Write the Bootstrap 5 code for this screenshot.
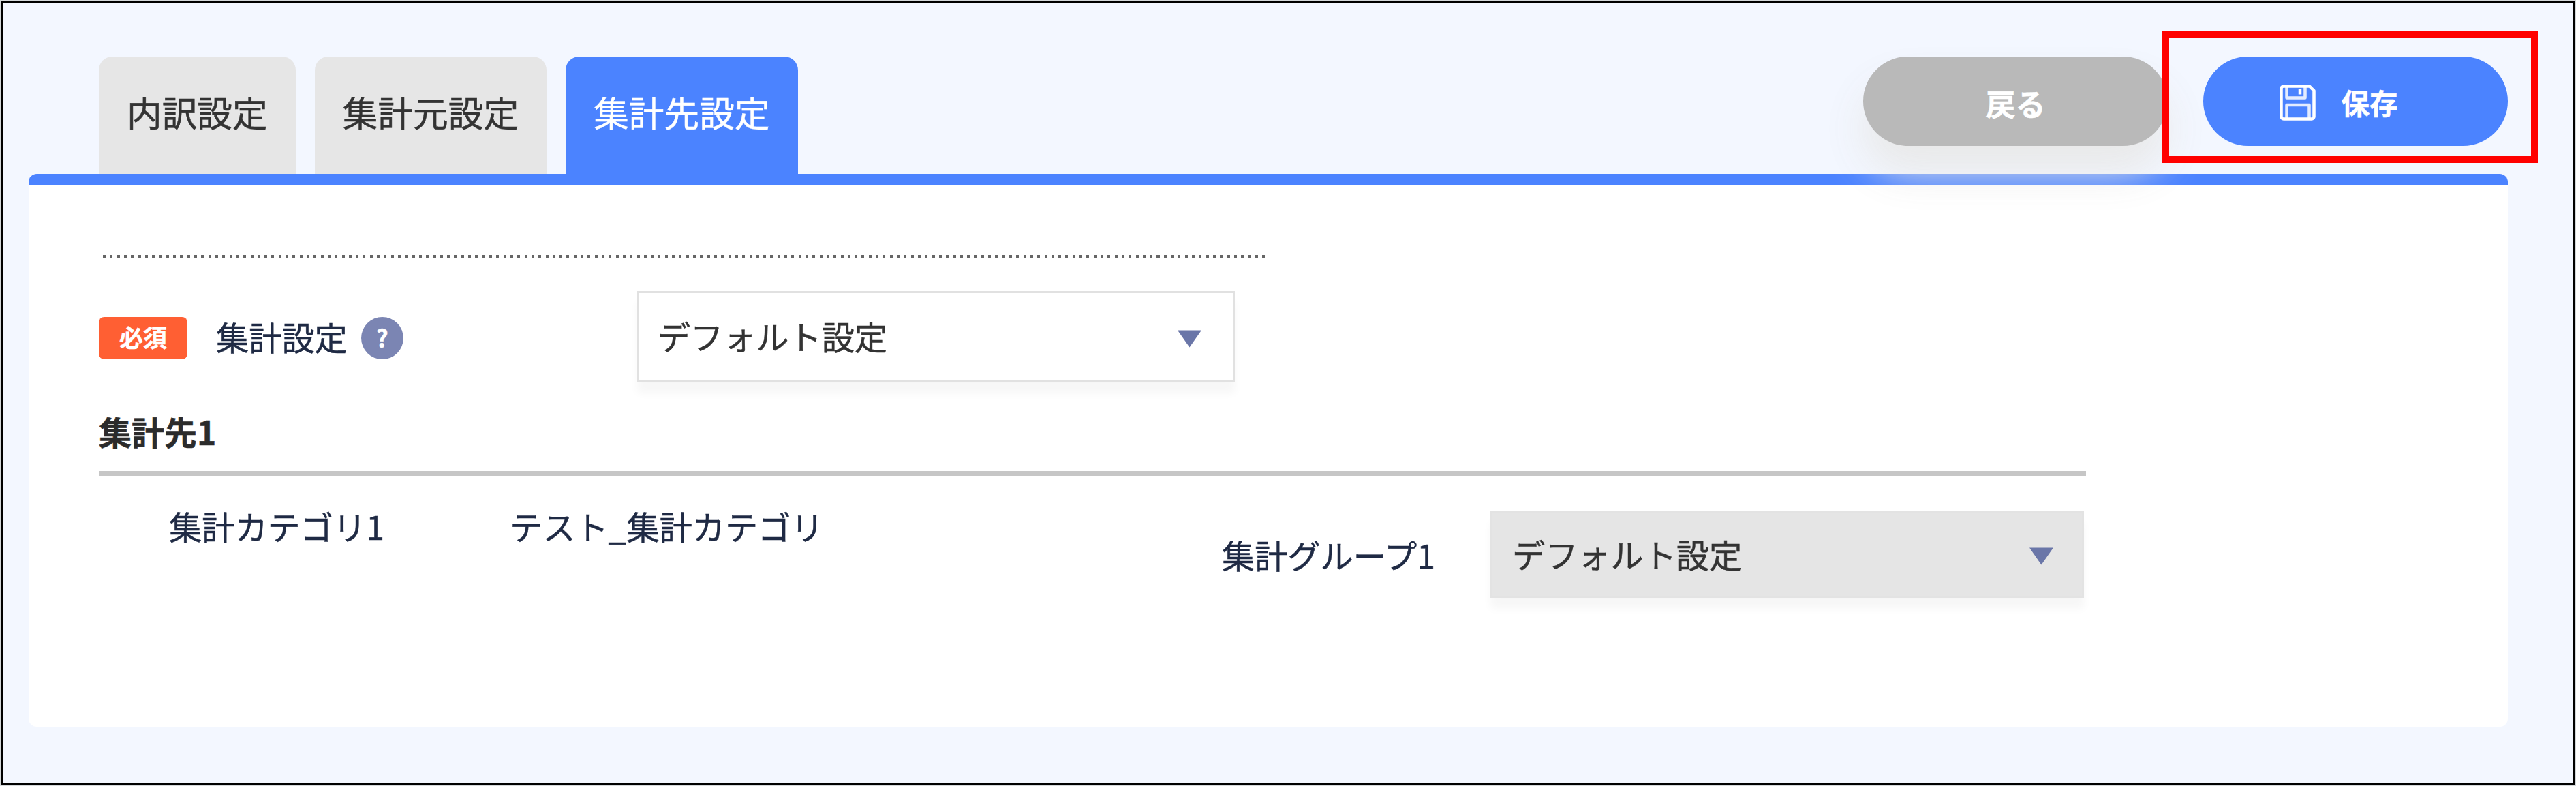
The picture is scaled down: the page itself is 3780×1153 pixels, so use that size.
<!DOCTYPE html>
<html lang="ja">
<head>
<meta charset="utf-8">
<meta name="viewport" content="width=device-width, initial-scale=1">
<title>集計先設定</title>
<link href="https://cdn.jsdelivr.net/npm/bootstrap@5.3.0/dist/css/bootstrap.min.css" rel="stylesheet">
<style>
html, body { height: 100%; }
body { font-family: "Noto Sans CJK JP", sans-serif; font-size: 48px; line-height: 1; color: #1f2a44; background: #d4d8da; overflow: hidden; -webkit-text-stroke: .5px currentColor; }
.screen { margin: 1px; width: 3778px; height: 1151px; border: 3px solid #000; background: #f3f7ff; }
.topbar { height: 251px; padding: 79px 96px 0 141px; position: relative; z-index: 2; }
.set-tabs { gap: 28px; }
.set-tabs .nav-link { height: 172px; padding: 54px 41px 0; font-size: 51.7px; line-height: 54px; color: #333; background: #e6e6e6; border-radius: 20px 20px 0 0; white-space: nowrap; }
.set-tabs .nav-link.active { background: #4b83ff; color: #fff; }
.pill { width: 447px; height: 131px; border: 0; color: #fff; font-weight: 700; line-height: 1; --bs-btn-line-height: 1; }
.pill-back { background: #b9b9b9; font-size: 44px; box-shadow: 0 40px 60px rgba(232,232,232,.95); padding: 4px 0 0 0; }
.pill-save { background: #4b83ff; font-size: 41.5px; padding: 0 49px 0 0; gap: 37px; }
.pill-save svg { margin-top: 4px; }
.pill-save span { padding-top: 5px; }
.btns { gap: 52px; }
.callout { position: absolute; left: 3169px; top: 42px; width: 551px; height: 193px; border: 10px solid #f00; }
.panel { margin: 0 96px 0 38px; height: 811px; border: 0; border-top: 17px solid #4b83ff; border-radius: 12px; background: #fff; padding: 102px 0 0 103px; color: inherit; }
.dots { width: 1710px; height: 5px; margin-left: 6px; background: repeating-linear-gradient(90deg, #666 0 4px, transparent 4px 10.31px); }
.row-main { margin-top: 48px; height: 134px; }
.req { width: 130px; height: 62px; margin-top: 3px; padding-bottom: 4px; border-radius: 8px; background: #ff5f33; color: #fff; font-size: 35px; font-weight: 700; }
.lbl { margin-left: 42px; padding-bottom: 2px; white-space: nowrap; font-size: 48.2px; }
.help { width: 62px; height: 62px; margin: 3px 0 0 20px; background: #7b85b3; color: #fff; font-size: 35px; font-weight: 700; padding-bottom: 3px; }
.pick { height: 134px; padding: 0 46px 0 27px; border: 3px solid #e1e1e1; border-radius: 0; background: #fff; color: #333; font-size: 48.2px; box-shadow: 0 16px 12px rgba(0,0,0,.035); }
.pick span { padding-bottom: 3px; }
.pick-a { width: 877px; margin-left: 343px; }
.pick-b { width: 871px; height: 127px; margin-left: 81px; padding: 0 42px 0 29px; background: #e5e5e5; border-color: #e3e3e3; }
.tri { width: 35px; height: 26px; margin-top: 5px; }
.sec { width: 2916px; margin-top: 41px; padding-bottom: 29px; border-bottom: 7px solid #c6c6c6; color: #2b2b2b; }
.sec h2 { margin: 0; font-size: 48px; line-height: 60px; font-weight: 700; }
.row-grp { margin-top: 52px; padding-left: 103px; font-size: 48.2px; white-space: nowrap; }
.cat { width: 500px; line-height: 42px; }
.val { width: 1045px; line-height: 42px; }
</style>
<script src="https://cdn.jsdelivr.net/npm/bootstrap@5.3.0/dist/js/bootstrap.bundle.min.js"></script>
</head>
<body>
<div class="screen">
  <header class="topbar d-flex justify-content-between align-items-start">
    <nav class="nav set-tabs flex-nowrap">
      <a class="nav-link" href="#">内訳設定</a>
      <a class="nav-link" href="#">集計元設定</a>
      <a class="nav-link active" href="#">集計先設定</a>
    </nav>
    <div class="btns d-flex">
      <button type="button" class="btn pill pill-back rounded-pill">戻る</button>
      <button type="button" class="btn pill pill-save rounded-pill d-flex align-items-center justify-content-center">
        <svg width="53" height="53" viewBox="0 0 53 53" fill="none" stroke="#fff" stroke-width="4.5" stroke-linejoin="round"><path d="M6 2.5H44L50.500 9V47a3.500 3.500 0 0 1-3.500 3.500H6A3.500 3.500 0 0 1 2.500 47V6A3.500 3.500 0 0 1 6 2.500Z"/><path d="M10.500 3V19.500H37.500V3" stroke-opacity=".85"/><path d="M10.500 50V30H43.500V50" stroke-opacity=".85"/><path d="M30 6V14.500"/></svg>
        <span>保存</span>
      </button>
    </div>
    <div class="callout"></div>
  </header>
  <main class="panel card">
    <div class="dots"></div>
    <div class="row-main d-flex align-items-center">
      <span class="req d-flex align-items-center justify-content-center">必須</span>
      <span class="lbl">集計設定</span>
      <span class="help rounded-circle d-flex align-items-center justify-content-center">?</span>
      <div class="pick pick-a d-flex align-items-center justify-content-between">
        <span>デフォルト設定</span>
        <svg class="tri" viewBox="0 0 35 25"><path d="M0 0H35L17.500 25Z" fill="#6a76a8"/></svg>
      </div>
    </div>
    <div class="sec"><h2>集計先1</h2></div>
    <div class="row-grp d-flex align-items-start">
      <div class="cat">集計カテゴリ1</div>
      <div class="val">テスト_集計カテゴリ</div>
      <div class="d-flex align-items-center">
        <span>集計グループ1</span>
        <div class="pick pick-b d-flex align-items-center justify-content-between">
          <span>デフォルト設定</span>
          <svg class="tri" viewBox="0 0 35 25"><path d="M0 0H35L17.500 25Z" fill="#6a76a8"/></svg>
        </div>
      </div>
    </div>
  </main>
</div>
</body>
</html>
